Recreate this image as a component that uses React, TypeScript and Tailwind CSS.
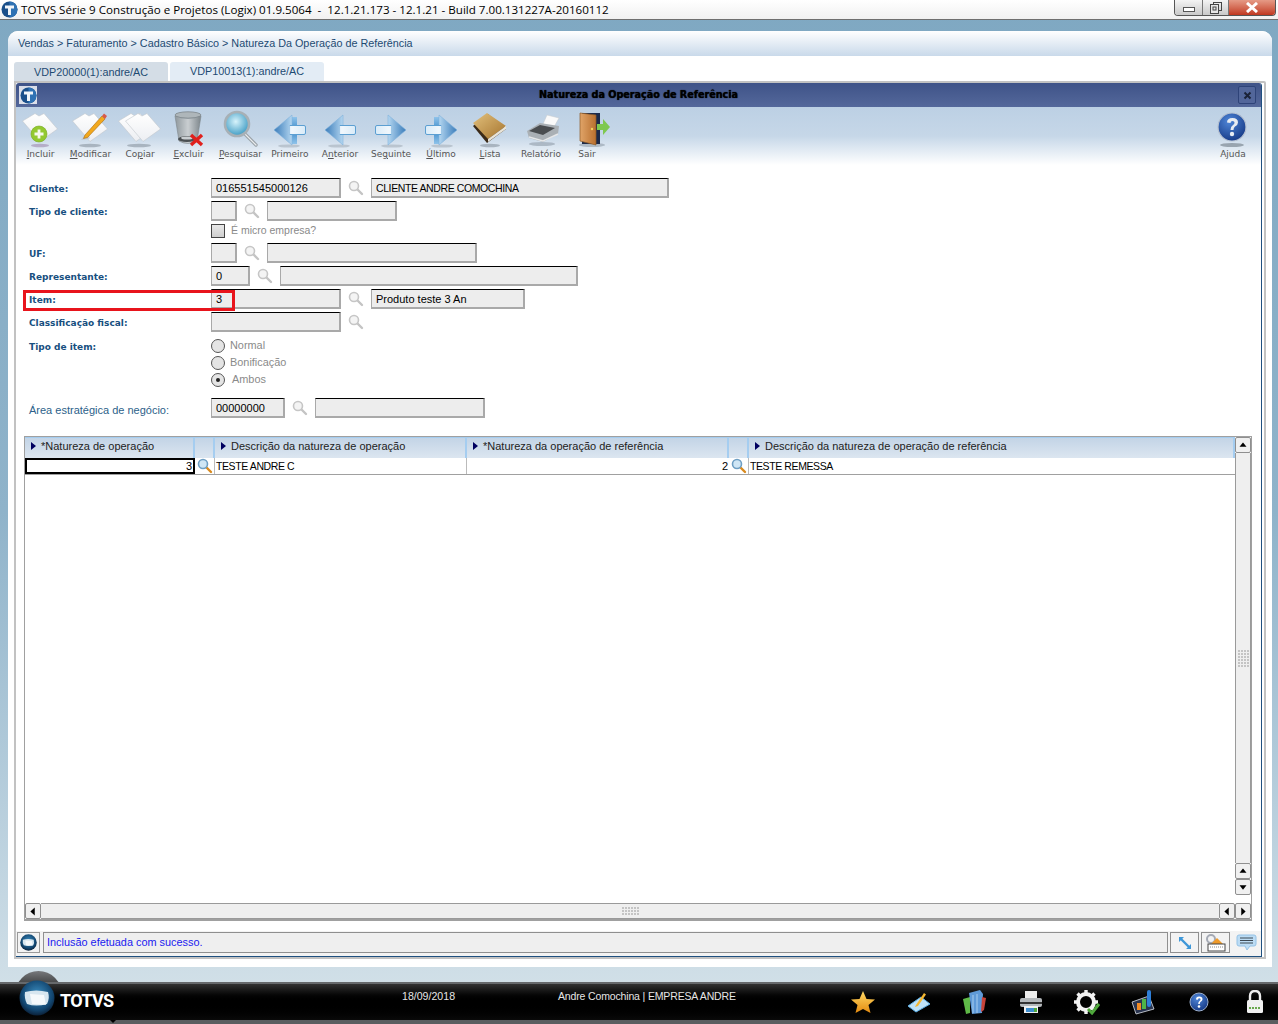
import React from "react";

const dejavu = "font-['DejaVu_Sans',sans-serif]";

const Defs = () => (
  <svg className="absolute w-0 h-0">
    <defs>
      <linearGradient id="paper" x1="0" y1="0" x2="0" y2="1">
        <stop offset="0" stopColor="#ffffff" />
        <stop offset="1" stopColor="#eceef2" />
      </linearGradient>
      <linearGradient id="arrow" x1="0" y1="0" x2="1" y2="0">
        <stop offset="0" stopColor="#b4d6f0" />
        <stop offset="1" stopColor="#3a7cba" />
      </linearGradient>
      <linearGradient id="arrowBack" x1="0" y1="0" x2="0" y2="1">
        <stop offset="0" stopColor="#8fc3ea" />
        <stop offset="0.5" stopColor="#3f8ccb" />
        <stop offset="1" stopColor="#8fc3ea" />
      </linearGradient>
      <linearGradient id="arrowBody" x1="0" y1="0" x2="1" y2="0">
        <stop offset="0" stopColor="#d9ebf8" />
        <stop offset="1" stopColor="#f4f9fd" />
      </linearGradient>
      <radialGradient id="helpBall" cx="0.4" cy="0.3" r="0.8">
        <stop offset="0" stopColor="#4f86d8" />
        <stop offset="1" stopColor="#11337f" />
      </radialGradient>
      <radialGradient id="lens" cx="0.45" cy="0.4" r="0.6">
        <stop offset="0" stopColor="#d7f3fb" />
        <stop offset="1" stopColor="#3f9cc4" />
      </radialGradient>
      <linearGradient id="trash" x1="0" y1="0" x2="1" y2="0">
        <stop offset="0" stopColor="#8f989d" />
        <stop offset="0.5" stopColor="#c9ced1" />
        <stop offset="1" stopColor="#7d868b" />
      </linearGradient>
      <linearGradient id="book" x1="0" y1="0" x2="1" y2="1">
        <stop offset="0" stopColor="#e2c07c" />
        <stop offset="1" stopColor="#a5742e" />
      </linearGradient>
      <linearGradient id="door" x1="0" y1="0" x2="1" y2="0">
        <stop offset="0" stopColor="#e0a468" />
        <stop offset="1" stopColor="#b9702f" />
      </linearGradient>
      <radialGradient id="logoBall" cx="0.5" cy="0.4" r="0.6">
        <stop offset="0" stopColor="#3c8fc2" />
        <stop offset="0.75" stopColor="#12456f" />
        <stop offset="1" stopColor="#0b2139" />
      </radialGradient>
      <linearGradient id="star" x1="0" y1="0" x2="0" y2="1">
        <stop offset="0" stopColor="#ffd964" />
        <stop offset="1" stopColor="#e48b10" />
      </linearGradient>
    </defs>
  </svg>
);

const Shadow = ({ cx = 18, w = 12, color = "#6f7b86" }: { cx?: number; w?: number; color?: string }) => (
  <ellipse cx={cx} cy="33.5" rx={w} ry="1.8" fill={color} opacity="0.45" />
);

const Sheet = ({ dx = 0 }: { dx?: number }) => (
  <path
    d={`M${0.5 + dx} 9 L${13 + dx} 1.5 L${17 + dx} 4 L${22 + dx} 1.5 L${35.5 + dx} 17 L${18 + dx} 29.5 Z`}
    fill="url(#paper)"
    stroke="#c2c7cd"
    strokeWidth="0.6"
  />
);

const IconIncluir = () => (
  <svg width="38" height="36" viewBox="0 0 38 36">
    <Shadow w={9} color="#8a6a96" />
    <Sheet />
    <circle cx="17" cy="22" r="8" fill="#93c930" stroke="#76a81f" strokeWidth="0.6" />
    <path d="M17 17.5v9M12.5 22h9" stroke="#f4f8ec" strokeWidth="2.8" />
  </svg>
);

const IconModificar = () => (
  <svg width="38" height="36" viewBox="0 0 38 36">
    <Shadow w={11} />
    <Sheet />
    <path d="M13 23 Q20 24 17 27 L9 28 Z" fill="#b9bcc0" opacity="0.6" />
    <path d="M13 23 L30 4 L33 7 L15.5 25.5 L11.5 26.5 Z" fill="#f2a81d" stroke="#a86a10" strokeWidth="0.6" />
    <path d="M30 4 L32 1.5 L35 4 L33 7 Z" fill="#d85a4a" />
  </svg>
);

const IconCopiar = () => (
  <svg width="44" height="36" viewBox="0 0 44 36">
    <Shadow cx={21} w={12} />
    <Sheet />
    <Sheet dx={7} />
  </svg>
);

const IconExcluir = () => (
  <svg width="32" height="38" viewBox="0 0 32 38">
    <ellipse cx="15" cy="5" rx="13" ry="3.2" fill="#aeb6ba" stroke="#7d868b" strokeWidth="0.8" />
    <path d="M2 6 L6 31 Q15 36 24 31 L28 6 Q15 11 2 6 Z" fill="url(#trash)" stroke="#7d868b" strokeWidth="0.6" />
    <ellipse cx="14" cy="29" rx="9" ry="3" fill="#4a4f52" />
    <ellipse cx="14" cy="28" rx="6" ry="1.6" fill="#c9ced1" />
    <path d="M18 25 L29 35 M29 25 L18 35" stroke="#e0201c" strokeWidth="3.4" />
  </svg>
);

const IconPesquisar = () => (
  <svg width="38" height="38" viewBox="0 0 38 38">
    <path d="M22 23 L34 35" stroke="#9aa2a8" strokeWidth="3.4" strokeLinecap="round" />
    <path d="M22 23 L34 35" stroke="#e9ecee" strokeWidth="1.2" strokeLinecap="round" />
    <circle cx="15" cy="14" r="12" fill="url(#lens)" stroke="#a7b0b6" strokeWidth="2.6" />
  </svg>
);

// seta para a direita; as de voltar sao espelhadas
const Arrow = ({ flip, bars }: { flip?: boolean; bars?: boolean }) => (
  <svg width="36" height="34" viewBox="0 0 36 34" style={flip ? { transform: "scaleX(-1)" } : undefined}>
    <ellipse cx="19" cy="32" rx="11" ry="1.6" fill="#6f7b86" opacity="0.3" />
    {bars && <path d="M11 3 L17 3 L17 30 L11 30 Z" fill="url(#arrowBack)" />}
    <path
      d={bars ? "M16 1 L34 16 L16 31 Z" : "M15 1 L33 16 L15 31 Z"}
      fill="url(#arrow)"
      stroke="#7fb2dc"
      strokeWidth="0.6"
    />
    <path
      d="M4 11.5 H18 V20.5 H4 Q2.5 20.5 2.5 19 V13 Q2.5 11.5 4 11.5 Z"
      fill="url(#arrowBody)"
      stroke="#5c9fd2"
      strokeWidth="1"
    />
    <path d="M17.5 12 V20" stroke="#e6f2fb" strokeWidth="1.6" />
  </svg>
);

const IconLista = () => (
  <svg width="36" height="36" viewBox="0 0 36 36">
    <Shadow cx={18} w={10} />
    <path d="M1 14 L16 2 L34 17 L15 31 Z" fill="#3a2a18" />
    <path d="M1 11 L15 1 L34 14 L16 27 Z" fill="url(#book)" />
    <path d="M16 27 L34 14 L34 17 L16 30 Z" fill="#e9e4d8" />
  </svg>
);

const IconRelatorio = () => (
  <svg width="36" height="34" viewBox="0 0 36 34" className="ml-[5px]">
    <ellipse cx="16" cy="30" rx="13" ry="2" fill="#6f7b86" opacity="0.4" />
    <path d="M17 10 L21 1 L33 4 L28 13 Z" fill="#fafafa" stroke="#c4c8cc" strokeWidth="0.5" />
    <path d="M1 17 L14 9 L33 12 L32 20 L17 28 L3 24 Z" fill="#aab0b5" />
    <path d="M3 17 L14 11 L29 14 L17 21 Z" fill="#4a4d50" />
    <path d="M3 23 L17 27 L32 20" fill="none" stroke="#e5e7e9" strokeWidth="1.4" />
  </svg>
);

const IconSair = () => (
  <svg width="34" height="36" viewBox="0 0 34 36" className="ml-[14px]">
    <ellipse cx="15" cy="33" rx="13" ry="2" fill="#6f7b86" opacity="0.4" />
    <rect x="5" y="1" width="18" height="31" fill="#1c2a4a" />
    <path d="M3 1 L19 3 L19 33 L3 29 Z" fill="url(#door)" stroke="#8d5a26" strokeWidth="0.7" />
    <circle cx="15" cy="17" r="1.2" fill="#f3d25a" />
    <path d="M20 12 H26 V7 L33 15 L26 23 V18 H20 Z" fill="#7ec850" />
  </svg>
);

const IconAjuda = () => (
  <svg width="32" height="36" viewBox="0 0 32 36">
    <ellipse cx="15" cy="33" rx="12" ry="2" fill="#5a6570" opacity="0.5" />
    <circle cx="15" cy="15" r="14" fill="url(#helpBall)" stroke="#b7c2d2" strokeWidth="1.2" />
    <path d="M10 10.5 Q10 6 15.5 6 Q21 6 21 10.5 Q21 13 18 14.5 Q16.5 15.5 16.5 18 H13.5 Q13.5 14.5 16 13 Q17.5 12 17.5 10.5 Q17.5 9 15.5 9 Q13.5 9 13.5 11 Z" fill="#e8ecf2" />
    <circle cx="15" cy="22" r="2.2" fill="#e8ecf2" />
  </svg>
);

const tools: { label: React.ReactNode; w: string; icon: React.ReactNode }[] = [
  { label: <><u>I</u>ncluir</>, w: "w-[49px]", icon: <IconIncluir /> },
  { label: <><u>M</u>odificar</>, w: "w-[51px]", icon: <IconModificar /> },
  { label: <>Co<u>p</u>iar</>, w: "w-[48px]", icon: <IconCopiar /> },
  { label: <><u>E</u>xcluir</>, w: "w-[49px]", icon: <IconExcluir /> },
  { label: <><u>P</u>esquisar</>, w: "w-[55px]", icon: <IconPesquisar /> },
  { label: <>Primeiro</>, w: "w-[44px]", icon: <Arrow flip bars /> },
  { label: <>A<u>n</u>terior</>, w: "w-[56px]", icon: <Arrow flip /> },
  { label: <>Se<u>g</u>uinte</>, w: "w-[46px]", icon: <Arrow /> },
  { label: <><u>Ú</u>ltimo</>, w: "w-[54px]", icon: <Arrow bars /> },
  { label: <><u>L</u>ista</>, w: "w-[44px]", icon: <IconLista /> },
  { label: <>Relatório</>, w: "w-[58px]", icon: <IconRelatorio /> },
  { label: <>Sair</>, w: "w-[34px]", icon: <IconSair /> },
];

const ToolButton = ({ label, w, icon }: { label: React.ReactNode; w: string; icon: React.ReactNode }) => (
  <div className={`${w} flex flex-col items-center shrink-0`}>
    <div className="h-[40px] flex items-end justify-center">{icon}</div>
    <span className={`${dejavu} text-[9px] leading-[12px] text-[#555] whitespace-nowrap`}>{label}</span>
  </div>
);

const Lupa = ({ orange }: { orange?: boolean }) => (
  <svg width="16" height="16" viewBox="0 0 16 16" className="shrink-0">
    <path d="M9 9 L14 14" stroke={orange ? "#d98a1e" : "#c4c4c4"} strokeWidth="2.4" strokeLinecap="round" />
    <circle cx="6" cy="6" r="4.5" fill={orange ? "#cfe6f5" : "#f4f4f4"} stroke={orange ? "#6e9fc4" : "#c6c6c6"} strokeWidth="1.6" />
  </svg>
);

const Field = ({ w, text, tight }: { w: string; text?: string; tight?: boolean }) => (
  <div
    className={`${w} h-[20px] shrink-0 bg-[#ededed] border border-[#a9a9a9] border-r-2 border-b-2 border-t-black pl-[4px] leading-[18px] text-black whitespace-nowrap ${
      tight ? "text-[10.5px] tracking-[-0.4px]" : "text-[11px]"
    }`}
  >
    {text}
  </div>
);

const Label = ({ children }: { children: React.ReactNode }) => (
  <div className={`${dejavu} w-[182px] h-[20px] shrink-0 text-[9px] font-bold leading-[23px] text-[#174f80]`}>{children}</div>
);

const Radio = ({ label, on }: { label: string; on?: boolean }) => (
  <div className="h-[17px] flex items-center gap-[5px]">
    <div className="w-[14px] h-[14px] rounded-full border border-[#555] bg-[#e4e4e4] flex items-center justify-center shrink-0">
      {on && <div className="w-[4px] h-[4px] rounded-full bg-[#222]" />}
    </div>
    <span className={`text-[10.9px] text-[#8a8a8a] ${on ? "ml-[2px]" : ""}`}>{label}</span>
  </div>
);

const Triangle = () => <span className="inline-block w-0 h-0 border-y-[4px] border-y-transparent border-l-[5px] border-l-[#000060] shrink-0" />;

const HeadCell = ({ w, text }: { w: string; text?: string }) => (
  <div className={`${w} h-[20px] pb-[4px] shrink-0 flex items-center gap-[5px] pl-[6px] border-r-2 border-[#a5cdf0] text-[11px] text-[#222] whitespace-nowrap`}>
    {text && <Triangle />}
    {text && <span>{text}</span>}
  </div>
);

const ScrollBtn = ({ dir }: { dir: "up" | "down" | "left" | "right" }) => {
  const path = { up: "M4 9 L12 9 L8 4 Z", down: "M4 5 L12 5 L8 10 Z", left: "M10 3 L10 12 L5 7.5 Z", right: "M6 3 L6 12 L11 7.5 Z" }[dir];
  return (
    <div className="w-[16px] h-[16px] shrink-0 bg-[#f0f0f0] border border-[#8f8f8f] rounded-[2px] flex items-center justify-center">
      <svg width="14" height="14" viewBox="0 0 16 14">
        <path d={path} fill="#000" />
      </svg>
    </div>
  );
};

const Dots = ({ cols, rows }: { cols: number; rows: number }) => (
  <div className="grid gap-[1px]" style={{ gridTemplateColumns: `repeat(${cols}, 2px)` }}>
    {Array.from({ length: cols * rows }).map((_, i) => (
      <div key={i} className="w-[2px] h-[2px] bg-[#c4c4c4]" />
    ))}
  </div>
);

const LogoBall = ({ size }: { size: number }) => (
  <svg width={size} height={size} viewBox="0 0 36 36" className="shrink-0">
    <circle cx="18" cy="18" r="17.5" fill="url(#logoBall)" />
    <path d="M6 12 Q17 9 29 12 Q31 18 28 24 Q17 27 8 24 Q5 18 6 12 Z" fill="#d7e6ef" />
    <path d="M11 14 L25 15 L27 25 L13 24 Z" fill="#ffffff" opacity="0.75" />
  </svg>
);

const TitleLogo = () => (
  <svg width="17" height="17" viewBox="0 0 17 17" className="shrink-0">
    <circle cx="8.5" cy="8.5" r="8" fill="#1a4f8a" />
    <path d="M8.5 .5 A8 8 0 0 1 8.5 16.5 Z" fill="#2f72b4" />
    <path d="M4 4.5 H13 V7.5 H10 V14 H7 V7.5 H4 Z" fill="#f1f5f9" />
  </svg>
);

const TitleBar = () => (
  <div className="relative h-[20px] shrink-0 flex items-center gap-[3px] pl-[1px] bg-gradient-to-b from-white to-[#f1f1f1] border-b border-[#6f6f6f]">
    <TitleLogo />
    <span className="font-['Open_Sans',sans-serif] text-[11.6px] text-black whitespace-pre">
      TOTVS Série 9 Construção e Projetos (Logix) 01.9.5064  -  12.1.21.173 - 12.1.21 - Build 7.00.131227A-20160112
    </span>
    <div className="absolute right-[2px] top-0 h-[16px] flex border border-t-0 border-[#555] rounded-b-[4px] overflow-hidden">
      <div className="w-[28px] bg-gradient-to-b from-[#f4f4f4] to-[#c9c9c9] border-r border-[#777] flex items-end justify-center pb-[3px]">
        <div className="w-[12px] h-[5px] border border-[#555] bg-white" />
      </div>
      <div className="w-[26px] bg-gradient-to-b from-[#f4f4f4] to-[#c9c9c9] border-r border-[#777] flex items-center justify-center">
        <svg width="12" height="12" viewBox="0 0 12 12">
          <rect x="3.5" y="0.5" width="8" height="8" fill="none" stroke="#444" />
          <rect x="0.5" y="2.5" width="8" height="9" fill="#e6e6e6" stroke="#444" />
          <rect x="3" y="5" width="3" height="3" fill="none" stroke="#444" />
        </svg>
      </div>
      <div className="w-[46px] bg-gradient-to-b from-[#e59a86] to-[#c0361e] flex items-center justify-center">
        <svg width="14" height="11" viewBox="0 0 14 11">
          <path d="M2 1 L12 10 M12 1 L2 10" stroke="#fff" strokeWidth="3" />
        </svg>
      </div>
    </div>
  </div>
);

const WindowHeader = () => (
  <div className="relative h-[24px] shrink-0 flex items-center justify-center bg-gradient-to-b from-[#3f5388] to-[#54689b]">
    <div className="absolute left-[3px] top-[3px] w-[18px] h-[18px] bg-white/80 flex items-center justify-center">
      <TitleLogo />
    </div>
    <span className={`${dejavu} text-[9.6px] font-bold text-black [text-shadow:0_0_1px_#000]`}>Natureza da Operação de Referência</span>
    <div className="absolute right-[5px] top-[3px] w-[18px] h-[18px] rounded-[2px] border border-[#2e4378] bg-[#52669a] flex items-center justify-center">
      <svg width="9" height="9" viewBox="0 0 9 9">
        <path d="M1.5 1.5 L7.5 7.5 M7.5 1.5 L1.5 7.5" stroke="#1a2238" strokeWidth="2" />
      </svg>
    </div>
  </div>
);

const Toolbar = () => (
  <div className="h-[58px] shrink-0 flex items-start justify-between bg-gradient-to-b from-[#bcd0e4] via-[#c6d7e8] to-white pt-[1px]">
    <div className="flex">
      {tools.map((t, i) => (
        <ToolButton key={i} label={t.label} w={t.w} icon={t.icon} />
      ))}
    </div>
    <div className="mr-[8px] w-[40px]">
      <ToolButton label="Ajuda" w="w-[40px]" icon={<IconAjuda />} />
    </div>
  </div>
);

const Form = () => (
  <div className="relative h-[271px] shrink-0 pl-[13px] pt-[13px] font-['Liberation_Sans',sans-serif]">
    {/* marca vermelha sobre o campo Item */}
    <div className="absolute left-[7px] top-[125px] w-[212px] h-[21px] border-[3px] border-[#e8141c] z-10 pointer-events-none" />

    <div className="flex items-center h-[20px]">
      <Label>Cliente:</Label>
      <Field w="w-[130px]" text="016551545000126" />
      <div className="mx-[7px]"><Lupa /></div>
      <Field w="w-[298px]" text="CLIENTE ANDRE COMOCHINA" tight />
    </div>
    <div className="flex items-center h-[20px] mt-[3px]">
      <Label>Tipo de cliente:</Label>
      <Field w="w-[26px]" />
      <div className="mx-[7px]"><Lupa /></div>
      <Field w="w-[130px]" />
    </div>
    <div className="flex items-center h-[16px] mt-[2px] ml-[182px] gap-[6px]">
      <div className="w-[14px] h-[14px] border border-[#444] bg-gradient-to-b from-[#e9e9e9] to-[#cfcfcf]" />
      <span className="text-[10.5px] text-[#8a8a8a]">É micro empresa?</span>
    </div>
    <div className="flex items-center h-[20px] mt-[4px]">
      <Label>UF:</Label>
      <Field w="w-[26px]" />
      <div className="mx-[7px]"><Lupa /></div>
      <Field w="w-[210px]" />
    </div>
    <div className="flex items-center h-[20px] mt-[3px]">
      <Label>Representante:</Label>
      <Field w="w-[39px]" text="0" />
      <div className="mx-[7px]"><Lupa /></div>
      <Field w="w-[298px]" />
    </div>
    <div className="flex items-center h-[20px] mt-[3px]">
      <Label>Item:</Label>
      <Field w="w-[130px]" text="3" />
      <div className="mx-[7px]"><Lupa /></div>
      <Field w="w-[154px]" text="Produto teste 3 An" />
    </div>
    <div className="flex items-center h-[20px] mt-[3px]">
      <Label>Classificação fiscal:</Label>
      <Field w="w-[130px]" />
      <div className="ml-[7px]"><Lupa /></div>
    </div>
    <div className="flex mt-[5px]">
      <div className="-mt-[1px]">
        <Label>Tipo de item:</Label>
      </div>
      <div className="flex flex-col">
        <Radio label="Normal" />
        <Radio label="Bonificação" />
        <Radio label="Ambos" on />
      </div>
    </div>
    <div className="flex items-center h-[20px] mt-[10px]">
      <div className="w-[182px] h-[20px] shrink-0 text-[11px] leading-[25px] text-[#2c5f8a]">Área estratégica de negócio:</div>
      <Field w="w-[74px]" text="00000000" />
      <div className="mx-[7px]"><Lupa /></div>
      <Field w="w-[170px]" />
    </div>
  </div>
);

const DataGrid = () => (
  <div className="ml-[8px] mr-[9px] h-[485px] shrink-0 flex flex-col border-l border-r border-b-2 border-t border-[#a0a0a0] font-['Liberation_Sans',sans-serif]">
    <div className="flex flex-1 min-h-0">
      <div className="w-[1210px] shrink-0 flex flex-col">
        <div className="flex bg-gradient-to-b from-[#c3d4e6] to-[#dce6f0] border-t border-[#a5cdf0]">
          <HeadCell w="w-[170px]" text="*Natureza de operação" />
          <HeadCell w="w-[20px]" />
          <HeadCell w="w-[252px]" text="Descrição da natureza de operação" />
          <HeadCell w="w-[262px]" text="*Natureza da operação de referência" />
          <HeadCell w="w-[20px]" />
          <HeadCell w="w-[486px]" text="Descrição da natureza de operação de referência" />
        </div>
        <div className="flex h-[17px] border-b border-[#a0a0a0] text-[11px] text-black">
          <div className="w-[170px] border-2 border-black text-right pr-[1px] leading-[13px]">3</div>
          <div className="w-[20px] border-r border-[#bbb] pl-[2px]"><Lupa orange /></div>
          <div className="w-[252px] border-r border-[#bbb] pl-[1px] leading-[16px] text-[10.5px] tracking-[-0.4px]">TESTE ANDRE C</div>
          <div className="w-[262px] text-right pr-[1px] leading-[16px]">2</div>
          <div className="w-[20px] border-r border-[#bbb] pl-[2px]"><Lupa orange /></div>
          <div className="w-[486px] pl-[1px] leading-[16px] text-[10.5px] tracking-[-0.4px]">TESTE REMESSA</div>
        </div>
      </div>
      <div className="w-[16px] shrink-0 flex flex-col items-center">
        <ScrollBtn dir="up" />
        <div className="flex-1 w-[16px] bg-[#efefef] border-x border-[#9a9a9a] flex items-center justify-center">
          <Dots cols={4} rows={6} />
        </div>
        <ScrollBtn dir="up" />
        <ScrollBtn dir="down" />
        <div className="h-[8px]" />
      </div>
    </div>
    <div className="flex h-[16px] shrink-0">
      <ScrollBtn dir="left" />
      <div className="flex-1 bg-[#efefef] border-y border-[#9a9a9a] flex items-center justify-center">
        <Dots cols={6} rows={3} />
      </div>
      <ScrollBtn dir="left" />
      <ScrollBtn dir="right" />
    </div>
  </div>
);

const StatusBar = () => (
  <div className="h-[25px] shrink-0 mt-[10px] pt-[1px] flex items-start gap-[2px] bg-[#f3f3f3] pl-[1px] pr-[1px] font-['Liberation_Sans',sans-serif]">
    <div className="w-[23px] h-[21px] mr-[1px] border border-[#9a9a9a] flex items-center justify-center shrink-0">
      <LogoBall size={17} />
    </div>
    <div className="flex-1 h-[21px] border border-[#8f8f8f] bg-[#efefef] pl-[3px] text-[10.9px] leading-[19px] text-[#1a1af0]">
      Inclusão efetuada com sucesso.
    </div>
    <div className="w-[29px] h-[21px] border border-[#8f8f8f] flex items-center justify-center shrink-0">
      <svg width="14" height="14" viewBox="0 0 14 14">
        <path d="M2 2 L12 12" stroke="#3e97d8" strokeWidth="2.4" />
        <path d="M1 1 H6 L1 6 Z M13 13 H8 L13 8 Z" fill="#3e97d8" />
      </svg>
    </div>
    <div className="w-[29px] h-[21px] border border-[#8f8f8f] flex items-center justify-center shrink-0">
      <svg width="22" height="18" viewBox="0 0 22 18">
        <circle cx="6" cy="5" r="4" fill="none" stroke="#a4a9b4" strokeWidth="2" />
        <path d="M12 4 L18 10 H6 Z" fill="#f09a28" />
        <rect x="3" y="10" width="17" height="7" fill="#fff" stroke="#444" />
        <path d="M5 13 H18" stroke="#888" strokeDasharray="1 1" />
      </svg>
    </div>
    <div className="w-[28px] h-[21px] flex items-center justify-center shrink-0">
      <svg width="21" height="17" viewBox="0 0 21 17">
        <path d="M3 1 H18 Q20 1 20 3 V10 Q20 12 18 12 H14 L11 16 L9 12 H3 Q1 12 1 10 V3 Q1 1 3 1 Z" fill="#bcdcf4" stroke="#94c2e6" />
        <path d="M4 4 H17 M4 6.5 H17 M4 9 H17" stroke="#3d4a55" />
      </svg>
    </div>
  </div>
);

const BarIcons = [
  <svg key="star" width="26" height="24" viewBox="0 0 26 24">
    <path d="M13 1 L16.5 9 L25 9.5 L18.5 15 L20.5 23 L13 19 L5.5 23 L7.5 15 L1 9.5 L9.5 9 Z" fill="url(#star)" />
  </svg>,
  <svg key="note" width="24" height="24" viewBox="0 0 24 24">
    <path d="M1 16 L14 7 L23 14 L9 22 Z" fill="#bfe2f7" stroke="#5aaee6" />
    <path d="M9 15 L17 3 L19 4.5 L11 16 L8 17 Z" fill="#f4b731" />
  </svg>,
  <svg key="bldg" width="26" height="26" viewBox="0 0 26 26">
    <path d="M1 10 L8 8 L8 24 L4 25 Z" fill="#5fb947" />
    <path d="M7 4 L18 1 L21 5 L20 24 L10 25 Z" fill="#5f9ad8" />
    <path d="M20 8 L24 9 L22 21 L19 23 Z" fill="#c8443a" />
    <path d="M11 6 V24 M15 5 V24" stroke="#a9cdef" />
  </svg>,
  <svg key="print" width="24" height="24" viewBox="0 0 24 24">
    <rect x="6" y="1" width="12" height="8" fill="#ededed" />
    <rect x="1" y="8" width="22" height="9" rx="2" fill="#b4b8bb" />
    <rect x="1" y="12" width="22" height="2" fill="#333" />
    <rect x="5" y="16" width="14" height="7" fill="#eef0f2" />
    <rect x="7" y="18" width="8" height="4" fill="#3f8fd0" />
    <rect x="15" y="18" width="3" height="4" fill="#4fa83c" />
  </svg>,
  <svg key="gear" width="26" height="26" viewBox="0 0 26 26">
    <circle cx="12" cy="13" r="8" fill="none" stroke="#f2f2f2" strokeWidth="4" />
    <path d="M12 1 V5 M12 21 V25 M0 13 H4 M20 13 H24 M3.5 4.5 L6.5 7.5 M17.5 18.5 L20.5 21.5 M3.5 21.5 L6.5 18.5 M17.5 7.5 L20.5 4.5" stroke="#f2f2f2" strokeWidth="3.4" />
    <path d="M14 20 L18 24 L25 15" fill="none" stroke="#4fa83c" strokeWidth="3" />
  </svg>,
  <svg key="chart" width="24" height="26" viewBox="0 0 24 26">
    <path d="M1 13 L18 7 L23 20 L5 25 Z" fill="#2a3550" stroke="#dfe3ea" strokeWidth="0.8" />
    <rect x="6" y="14" width="4" height="7" fill="#f08a24" />
    <rect x="11" y="10" width="4" height="10" fill="#4fb548" />
    <rect x="16" y="1" width="4" height="17" rx="2" fill="#2f7fd8" />
  </svg>,
  <svg key="help" width="20" height="20" viewBox="0 0 20 20">
    <circle cx="10" cy="10" r="9" fill="url(#helpBall)" stroke="#9fb2cf" />
    <path d="M7 7.5 Q7 4.5 10.2 4.5 Q13.5 4.5 13.5 7.3 Q13.5 9 11.5 10 Q10.8 10.5 10.8 12 H9.2 Q9.2 9.8 10.5 9 Q11.6 8.3 11.6 7.3 Q11.6 6.2 10.2 6.2 Q8.8 6.2 8.8 7.8 Z" fill="#fff" />
    <circle cx="10" cy="14.5" r="1.3" fill="#fff" />
  </svg>,
];

const TaskBar = () => (
  <div className="relative h-[42px] shrink-0 flex flex-col font-['Liberation_Sans',sans-serif]">
    <div className="absolute left-[15px] -top-[11px] w-[47px] h-[24px] rounded-t-full bg-gradient-to-b from-[#77797c] to-[#1a1a1a]" />
    <div className="absolute left-[19px] top-[-2px] z-10">
      <LogoBall size={36} />
    </div>
    <div className="relative h-[38px] flex items-center bg-gradient-to-b from-[#333] via-[#000] to-[#0a0a0a] border-t-2 border-[#66696c]">
      <span className="absolute left-[60px] top-[3px] font-['Roboto',sans-serif] text-[18px] font-bold text-white tracking-[-0.7px]">TOTVS</span>
      <span className="absolute left-[402px] top-[5px] text-[10.6px] text-[#e6e6e6]">18/09/2018</span>
      <span className="absolute left-[558px] top-[5px] text-[10.5px] tracking-[-0.15px] text-[#e6e6e6] whitespace-nowrap">Andre Comochina | EMPRESA ANDRE</span>
      <div className="ml-auto flex items-center">
        {BarIcons.map((icon, i) => (
          <div key={i} className="w-[56px] flex justify-center">
            {icon}
          </div>
        ))}
        <div className="w-[46px] ml-[5px] flex justify-center">
          <svg width="18" height="24" viewBox="0 0 18 24">
            <path d="M4 11 V6 Q4 1 9 1 Q14 1 14 6 V11" fill="none" stroke="#ececec" strokeWidth="2.4" />
            <rect x="1" y="10" width="16" height="13" rx="1.5" fill="#f0f0f0" />
            <path d="M3 18 H15" stroke="#6aa84f" strokeWidth="2" strokeDasharray="2 1" />
          </svg>
        </div>
      </div>
    </div>
    <div className="h-[4px] bg-[#5b5e60]" />
    <div className="absolute left-[110px] top-[38px] w-0 h-0 border-x-[3px] border-x-transparent border-t-[3px] border-t-black" />
  </div>
);

export default function App() {
  return (
    <div className="h-[1024px] w-full overflow-hidden flex flex-col bg-gradient-to-b from-[#7fa8c2] via-[#8fb3ca] to-[#d6e3ea] font-['Liberation_Sans',sans-serif]">
      <Defs />
      <TitleBar />
      <div className="flex-1 min-h-0 pt-[11px] pl-[8px] pr-[6px] pb-[15px] flex flex-col">
        <div className="flex-1 min-h-0 rounded-t-[10px] bg-white flex flex-col">
          <div className="h-[25px] shrink-0 rounded-t-[10px] bg-gradient-to-b from-white to-[#c9d9ea] pl-[10px] text-[10.8px] leading-[25px] text-[#1d4a72]">
            Vendas &gt; Faturamento &gt; Cadastro Básico &gt; Natureza Da Operação de Referência
          </div>
          <div className="flex h-[25px] shrink-0 items-end pl-[6px] gap-[2px] text-[10.8px] text-[#1d4a72]">
            <div className="w-[154px] h-[19px] rounded-t-[3px] bg-[#d4dde6] text-center leading-[20px]">VDP20000(1):andre/AC</div>
            <div className="w-[154px] h-[19px] rounded-t-[3px] bg-[#e3ecf5] text-center leading-[18px]">VDP10013(1):andre/AC</div>
          </div>
          <div className="ml-[6px] mr-[6px] h-[878px] shrink-0 border-2 border-[#c2c2c2] rounded-tr-[2px] pr-[2px]">
            <div className="h-full flex flex-col border-b border-r border-[#1f5080] bg-white rounded-t-[3px] overflow-hidden">
              <WindowHeader />
              <Toolbar />
              <Form />
              <DataGrid />
              <StatusBar />
            </div>
          </div>
        </div>
      </div>
      <TaskBar />
    </div>
  );
}
